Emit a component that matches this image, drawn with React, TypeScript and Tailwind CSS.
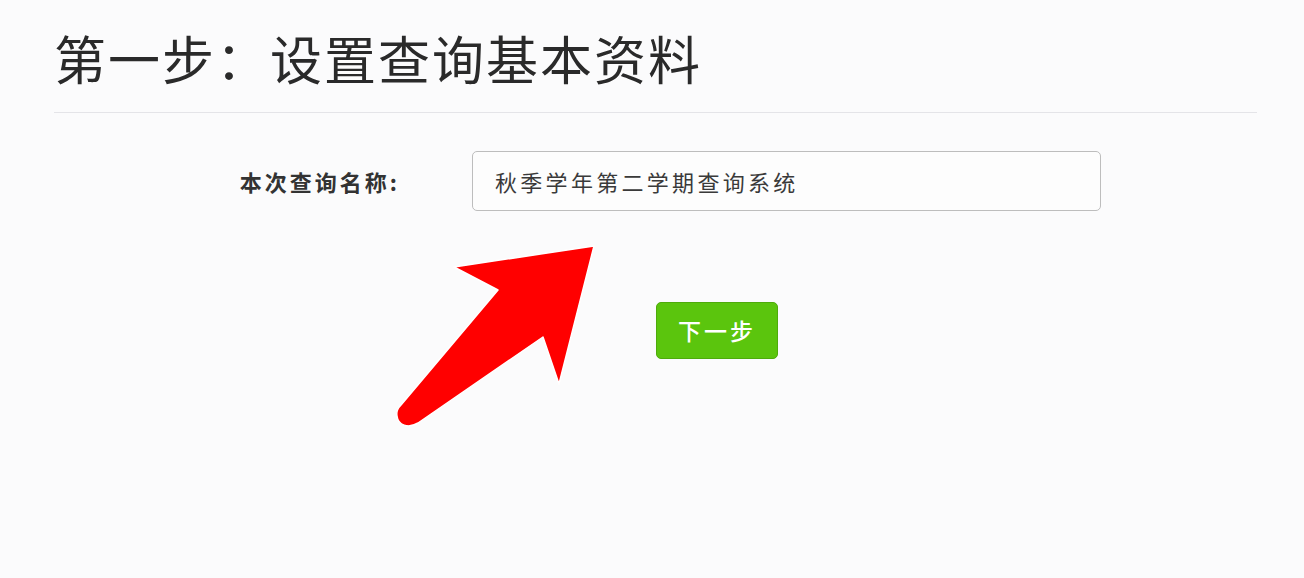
import React from "react";

export default function App() {
  return (
    <div
      className="relative w-[1304px] h-[578px] overflow-hidden bg-[#fbfbfc]"
      style={{ fontFamily: '"Noto Sans CJK SC", "Noto Sans", sans-serif' }}
    >
      <div className="pl-[54px] pr-[47px] pt-[22px]">
        <h1 className="text-[52px] leading-[72px] tracking-[2px] text-[#2a2a2a] font-normal">
          第一步：设置查询基本资料
        </h1>
        <div className="mt-[18px] h-px bg-[#e4e4e8]" />

        <div className="mt-[38px] flex items-center">
          <label className="w-[346px] text-right text-[22px] font-bold tracking-[3px] text-[#333]">
            本次查询名称:
          </label>
          <div className="ml-[72px] w-[629px] h-[60px] rounded-[5px] border border-[#bdbdbd] bg-[#fdfdfd] flex items-center pl-[22px]">
            <span className="text-[22px] tracking-[3.3px] text-[#3a3a3a]">
              秋季学年第二学期查询系统
            </span>
          </div>
        </div>

        <div className="mt-[91px] pl-[602px]">
          <button className="w-[122px] h-[57px] rounded-[5px] border border-[#4eab0b] bg-[#5bc50d] text-white text-[23px] font-medium tracking-[3px] flex items-center justify-center">
            下一步
          </button>
        </div>
      </div>

      <svg
        className="absolute left-0 top-0 pointer-events-none"
        width="1304"
        height="578"
        viewBox="0 0 1304 578"
      >
        <path
          d="M594,246 L559,384 L543,337 L418,423 C408,429 398,425 397,416 C396,411 398,408 401,405 L498,290 L454,267 Z"
          fill="#ff0000"
          stroke="#ffffff"
          strokeWidth="1.5"
          strokeLinejoin="round"
        />
      </svg>
    </div>
  );
}
